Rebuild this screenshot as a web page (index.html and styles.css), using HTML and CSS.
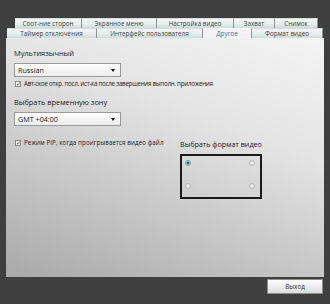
FILE: index.html
```html
<!DOCTYPE html>
<html>
<head>
<meta charset="UTF-8">
<title>Настройки</title>
<link rel="stylesheet" href="styles.css">
</head>
<body>
<div class="window">
	<div class="tabs">
		<div class="row row1">
			<div class="tab w67">Соот-ние сторон</div>
			<div class="tab w75">Экранное меню</div>
			<div class="tab w77">Настройка видео</div>
			<div class="tab w41">Захват</div>
			<div class="tab w43">Снимок</div>
		</div>
		<div class="row row2">
			<div class="tab w90">Таймер отключения</div>
			<div class="tab w106">Интерфейс пользователя</div>
			<div class="tab w49 active">Другое</div>
			<div class="tab w71">Формат видео</div>
		</div>
	</div>
	<div class="panel">
		<div class="label first">Мультиязычный</div>
		<div class="select">Russian<span class="arrow"></span></div>
		<div class="check"><span class="box">&#10003;</span>Авт-ское откр. посл. ист-ка после завершения выполн. приложения</div>
		<div class="label">Выбрать временную зону</div>
		<div class="select">GMT +04:00<span class="arrow"></span></div>
		<div class="bottom">
			<div class="check pip"><span class="box">&#10003;</span>Режим PIP, когда проигрывается видео файл</div>
			<div class="format">
				<div class="flabel">Выбрать формат видео</div>
				<div class="fbox">
					<span class="radio on"></span><span class="radio"></span>
					<span class="radio"></span><span class="radio"></span>
				</div>
			</div>
		</div>
	</div>
	<div class="footer">
		<div class="btn">Выход</div>
	</div>
</div>
</body>
</html>
```

FILE: styles.css
```css
body{margin:0;background:#3f3f3f;font-family:"Open Sans","DejaVu Sans",sans-serif;color:#222;}
.window{width:330px;height:304px;overflow:hidden;}
.tabs{padding-top:18px;}
.row{display:flex;height:10px;}
.row1{padding-left:15px;}
.row2{padding-left:7px;}
.tab{box-sizing:border-box;height:100%;font-size:6.3px;line-height:9px;text-align:center;white-space:nowrap;overflow:hidden;
	background:linear-gradient(#f4f6f5,#e4ecea 60%,#c9dedb);border-right:1px solid #8c9593;border-top:1px solid #d8dcdb;color:#444;}
.tab.active{background:#f3f3f3;color:#3a6db2;border-top:1px solid #fff;}
.w67{width:67px;}.w75{width:75px;}.w77{width:77px;}.w41{width:41px;}.w43{width:43px;}
.w90{width:90px;}.w106{width:106px;}.w49{width:49px;}.w71{width:71px;}
.panel{margin:0 6px;height:239px;box-sizing:border-box;padding:7px 8px;
	background:linear-gradient(200deg,#f4f4f4 0%,#e4e4e4 35%,#c4c4c4 70%,#a9a9a9 100%);}
.label{font-size:7.4px;line-height:10px;margin-top:9px;color:#222;}
.label.first{margin-top:3px;}
.select{position:relative;width:107px;height:14px;box-sizing:border-box;margin-top:5px;border:1px solid #9a9a9a;
	background:linear-gradient(#ffffff,#ececec);font-size:7.2px;line-height:12px;padding-left:3px;}
.arrow{position:absolute;right:5px;top:5px;border-left:2px solid transparent;border-right:2px solid transparent;border-top:3px solid #111;}
.check{display:flex;align-items:center;margin-top:2px;font-size:6.2px;line-height:9px;white-space:nowrap;letter-spacing:-0.25px;}
.pip{letter-spacing:0.1px;}
.box{width:6px;height:6px;box-sizing:border-box;border:1px solid #8a8a8a;background:#fff;margin:0 3px 0 1px;font-size:6px;line-height:4px;text-align:center;color:#222;letter-spacing:0;}
.bottom{display:flex;align-items:flex-start;margin-top:12px;}
.pip{margin-top:0;width:166px;flex:none;}
.format{margin-top:2px;}
.flabel{font-size:7.2px;line-height:9px;}
.fbox{width:82px;height:45px;box-sizing:border-box;margin-top:5px;border:2px solid #1a1a1a;padding:4px 5px 0 3px;
	display:grid;grid-template-columns:1fr 1fr;grid-template-rows:6px 6px;row-gap:17px;}
.radio{width:4px;height:4px;border-radius:50%;border:1px solid #b5b5b5;background:radial-gradient(#fafafa,#d4d4d4);}
.radio:nth-child(even){justify-self:end;}
.radio.on{background:radial-gradient(#2f6f78 30%,#a9d2d6 70%);border-color:#7fa7ad;}
.footer{display:flex;justify-content:flex-end;padding:2px 7px 0 0;}
.btn{width:56px;height:15px;box-sizing:border-box;border:1px solid #8e8e8e;background:linear-gradient(#fdfdfd,#dcdcdc);
	font-size:6.3px;line-height:13px;text-align:center;color:#333;}
```
